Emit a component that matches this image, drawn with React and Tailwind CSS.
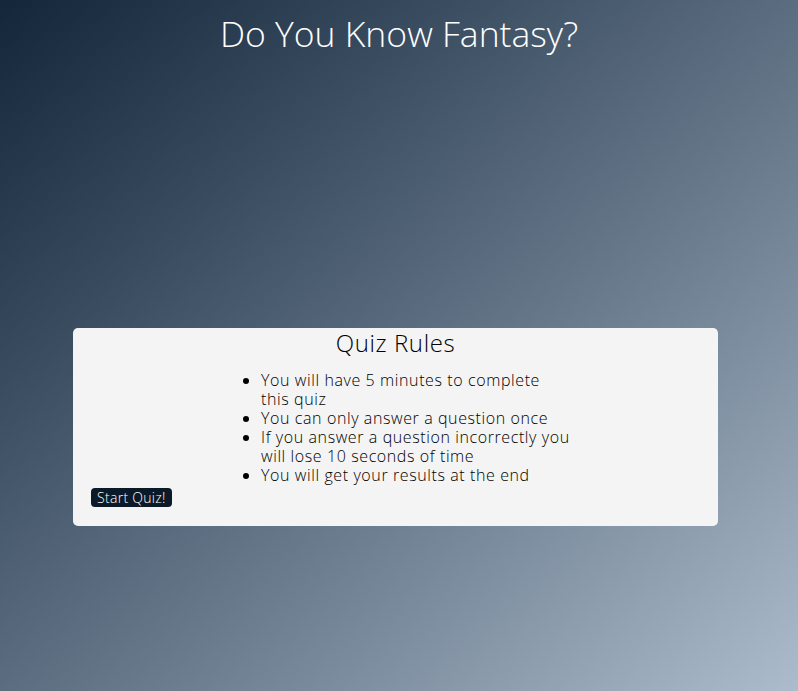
import React from 'react';

const rules = [
  'You will have 5 minutes to complete this quiz',
  'You can only answer a question once',
  'If you answer a question incorrectly you will lose 10 seconds of time',
  'You will get your results at the end',
];

const App = () => {
  return (
    <div className="min-h-screen bg-linear-to-br from-[#13263a] to-[#adbccc] font-['Open_Sans',sans-serif] font-light">
      <h1 className="pt-[12px] text-center text-[35.5px] leading-[42px] font-light text-white">
        Do You Know Fantasy?
      </h1>

      <div className="mt-[274px] ml-[73px] w-[645px] rounded-[5px] bg-[#f4f4f4] px-[18px] pb-[17px] text-black tracking-[0.6px]">
        <h2 className="text-center text-[24px] leading-[29px] font-light">Quiz Rules</h2>
        <ul className="mx-auto mt-[14px] w-[349px] list-disc pl-[40px] text-[16px] leading-[19px]">
          {rules.map((rule) => (
            <li key={rule}>{rule}</li>
          ))}
        </ul>
        <button className="mt-[3px] rounded-[4px] bg-[#0b1a28] px-[6px] text-[14px] leading-[19px] font-light tracking-[0.3px] text-white">
          Start Quiz!
        </button>
      </div>
    </div>
  );
};

export default App;
